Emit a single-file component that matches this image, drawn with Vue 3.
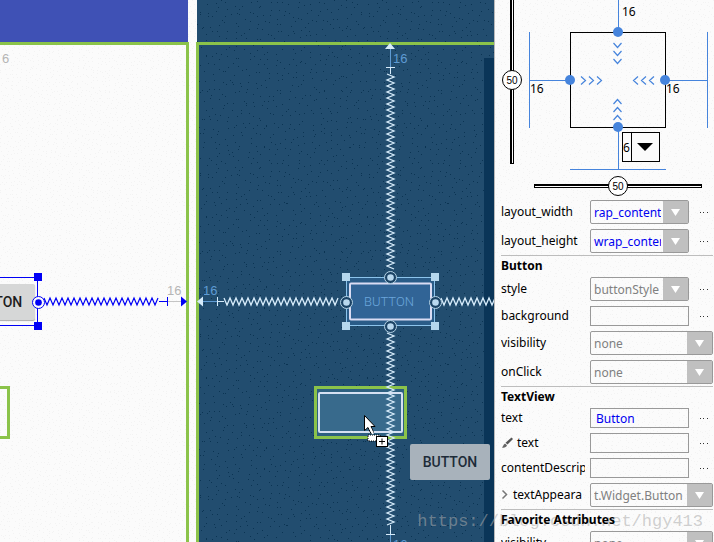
<script setup>
import { ref } from 'vue'

function speckles(size, cell, seed) {
  let s = seed
  const rnd = () => {
    s = (s * 16807) % 2147483647
    return s / 2147483647
  }
  let d = ''
  for (let y = 0; y < size; y += cell) {
    for (let x = 0; x < size; x += cell) {
      const px = x + Math.floor(rnd() * cell)
      const py = y + Math.floor(rnd() * cell)
      d += `M${px} ${py}h1v1h-1z`
    }
  }
  return d
}

// Spring between two anchors, drawn across (x) or down (y)
function spring(axis, from, to, centre) {
  const pts = []
  let side = -1
  for (let t = from; t <= to; t += 3) {
    const off = centre + side * 3.5
    pts.push(axis === 'x' ? `${t},${off}` : `${off},${t}`)
    side = -side
  }
  return pts.join(' ')
}

const darkDots = speckles(161, 7, 4711)
const lightDots = speckles(120, 4, 977)

const corners = [[346, 277], [435, 277], [346, 326], [435, 326]]
const anchors = [[390.5, 277.5], [390.5, 326.5], [346.5, 302.5], [435.5, 302.5]]

const vBias = ref(50)
const hBias = ref(50)

const sections = [
  {
    title: '',
    rows: [
      { id: 'lw', label: 'layout_width', kind: 'select', value: 'rap_content', blue: true, more: true },
      { id: 'lh', label: 'layout_height', kind: 'select', value: 'wrap_content', blue: true, more: true },
    ],
  },
  {
    title: 'Button',
    rows: [
      { id: 'style', label: 'style', kind: 'select', value: 'buttonStyle', more: true },
      { id: 'bg', label: 'background', kind: 'text', value: '', more: true },
      { id: 'vis', label: 'visibility', kind: 'select', value: 'none' },
      { id: 'click', label: 'onClick', kind: 'select', value: 'none' },
    ],
  },
  {
    title: 'TextView',
    rows: [
      { id: 'text', label: 'text', kind: 'text', value: 'Button', more: true },
      { id: 'ttext', label: 'text', kind: 'text', value: '', more: true, icon: 'brush' },
      { id: 'desc', label: 'contentDescrip', kind: 'text', value: '', more: true },
      { id: 'appear', label: 'textAppeara', kind: 'select', value: 't.Widget.Button', icon: 'expand' },
    ],
  },
  {
    title: 'Favorite Attributes',
    rows: [{ id: 'fvis', label: 'visibility', kind: 'select', value: 'none' }],
  },
]
</script>

<template>
  <main class="editor">
    <svg class="grain" aria-hidden="true">
      <defs>
        <pattern id="light" width="120" height="120" patternUnits="userSpaceOnUse">
          <path :d="lightDots" fill="#f3f3f3" shape-rendering="crispEdges" />
        </pattern>
      </defs>
      <rect width="100%" height="100%" fill="url(#light)" />
    </svg>

    <section class="pane design">
      <div class="appbar"></div>
      <div class="frame frame-right"></div>
      <div class="stage stage-right">
        <button class="widget widget-solid" type="button">BUTTON</button>
        <svg class="wires" width="189" height="542">
          <text x="2" y="63" class="dim grey">6</text>
          <g fill="none" stroke="#0000f5">
            <path d="M0 277.500H37.500V325.500H0" />
            <polyline :points="spring('x', 44, 159, 301.5)" stroke-width="1.200" />
            <path d="M159 301.500H167M167.500 297V306" />
          </g>
          <path d="M168 301.500H181" stroke="#c4c4c4" />
          <path d="M181 296.500L187 301.500L181 306.500z" fill="#0000f5" />
          <path d="M34 273h8v8h-8zM34 322h8v8h-8z" fill="#0000f5" />
          <circle cx="38.500" cy="302.500" r="6" fill="#fbfbfb" stroke="#0000f5" />
          <circle cx="38.500" cy="302.500" r="3.300" fill="#0000f5" />
          <text x="167" y="295" class="dim grey">16</text>
          <path d="M0 387.500H8.500V437.500H0" fill="none" stroke="#8bc34a" stroke-width="3" />
        </svg>
      </div>
    </section>

    <section class="pane blueprint">
      <svg class="grain" aria-hidden="true">
        <defs>
          <pattern id="dark" width="161" height="161" patternUnits="userSpaceOnUse">
            <path :d="darkDots" fill="#0b3453" shape-rendering="crispEdges" />
          </pattern>
        </defs>
        <rect width="100%" height="100%" fill="url(#dark)" />
      </svg>
      <div class="shadow"></div>
      <div class="appbar"></div>
      <div class="frame frame-left"></div>
      <div class="stage">
        <svg class="wires" width="298" height="542" viewBox="196 0 298 542">
          <g fill="none" stroke="#5f9bd3">
            <path d="M390.500 49V67M203 301.500H217M390.500 534V542" />
          </g>
          <rect x="346.500" y="277.500" width="88" height="48" fill="#2a5c88" stroke="#8cc4ec" />
          <rect x="350" y="283.500" width="81" height="36" rx="1" fill="#316496" stroke="#dadcf3" stroke-width="2" />
          <text x="389" y="306" text-anchor="middle" class="ghost">BUTTON</text>
          <rect x="315.500" y="387.500" width="90" height="50" fill="#2d6080" stroke="#8bc34a" stroke-width="3" />
          <rect x="319" y="393" width="83" height="39" rx="1" fill="#386a8c" stroke="#d5e0f2" stroke-width="2" />
          <g fill="none" stroke="#d6ebfa">
            <g stroke-width="1.300">
              <polyline :points="spring('y', 74, 271, 390.5)" />
              <polyline :points="spring('y', 333, 525, 390.5)" />
              <polyline :points="spring('x', 224, 340, 301.5)" />
              <polyline :points="spring('x', 441, 497, 301.5)" />
            </g>
            <path d="M386 67.500H395M390.500 67V74M390.500 525V534M386 534.500H395M217.500 297V306M217 301.500H224" />
          </g>
          <path d="M390 43L395 49H385zM197 301.500L203 296.500V306.500z" fill="#d6ebfa" />
          <rect v-for="(c, i) in corners" :key="i" :x="c[0] - 4" :y="c[1] - 4" width="8" height="8" fill="#b5d7ed" />
          <g v-for="(a, i) in anchors" :key="'a' + i">
            <circle :cx="a[0]" :cy="a[1]" r="6" fill="#1c4466" stroke="#b5d3e6" />
            <circle :cx="a[0]" :cy="a[1]" r="3.300" fill="#b9d8ee" />
          </g>
          <text x="393" y="63" class="dim sky">16</text>
          <text x="203" y="295" class="dim sky">16</text>
          <text x="393" y="549" class="dim sky">16</text>
          <g>
            <path d="M368 435h12v6h-12z" fill="#fff" stroke="#000" stroke-dasharray="1 1" />
            <path d="M364.500 415.500V430.500L368 427.500L371 433.500L373.500 432.500L371 426.500L375 426.500z" fill="#fff" stroke="#000" />
            <path d="M370 428L373 434" stroke="#fff" stroke-width="2" />
            <rect x="376.500" y="436.500" width="11" height="10" fill="#fff" stroke="#000" />
            <path d="M379 441.500H385M382 438.500V444.500" stroke="#000" />
          </g>
        </svg>
        <button class="widget widget-drag" type="button">BUTTON</button>
      </div>
    </section>

    <div class="watermark">https://blog.csdn.net/hgy413</div>

    <aside class="panel">
      <div class="inspector">
        <svg width="219" height="200" viewBox="1 0 219 200">
          <g fill="none" stroke="#4684dc">
            <path d="M124.500 0V32M124.500 127V169M76 169.500H172M35.500 32V128M36 80.500H76M172 80.500H213M213.500 32V128" />
          </g>
          <rect x="76.500" y="32.500" width="95" height="95" fill="none" stroke="#000" />
          <g fill="#4684dc">
            <circle cx="124" cy="32" r="5" />
            <circle cx="124" cy="127" r="5" />
            <circle cx="76" cy="80" r="5" />
            <circle cx="171" cy="80" r="5" />
          </g>
          <g fill="none" stroke="#4684dc" stroke-width="1.200">
            <path d="M119.500 43l4 4.500l4-4.500M119.500 51l4 4.500l4-4.500M119.500 59l4 4.500l4-4.500" />
            <path d="M119.500 104l4-4.500l4 4.500M119.500 112l4-4.500l4 4.500M119.500 120l4-4.500l4 4.500" />
            <path d="M87 76.500l4.500 4l-4.500 4M95 76.500l4.500 4l-4.500 4M103 76.500l4.500 4l-4.500 4" />
            <path d="M144 76.500l-4.500 4l4.500 4M152 76.500l-4.500 4l4.500 4M160 76.500l-4.500 4l4.500 4" />
          </g>
          <text x="128" y="16">16</text>
          <text x="36" y="93">16</text>
          <text x="172" y="93">16</text>
        </svg>
        <label class="bias bias-v">
          <input v-model="vBias" type="range" min="0" max="100" aria-label="Vertical bias" />
          <span>{{ vBias }}</span>
        </label>
        <label class="bias bias-h">
          <input v-model="hBias" type="range" min="0" max="100" aria-label="Horizontal bias" />
          <span>{{ hBias }}</span>
        </label>
        <div class="margin">
          <select aria-label="Bottom margin"><option>6</option></select>
          <svg width="28" height="28"><path d="M5 10h16l-8 8z" /></svg>
        </div>
      </div>

      <section v-for="(s, i) in sections" :key="i" class="group">
        <h2 v-if="s.title">{{ s.title }}</h2>
        <div v-for="r in s.rows" :key="r.id" class="row" :class="{ wide: !r.more }">
          <label :for="r.id">
            <svg v-if="r.icon === 'brush'" width="16" height="12" viewBox="0 0 16 12">
              <path d="M10.500 0.500L12 2L6.500 7.500L4.500 5.800z" fill="#555" />
              <path d="M4 6.500L6 8.300C5.500 10.500 3 11 1 10.500C2.500 9.500 2 7.500 4 6.500z" fill="#666" />
            </svg>
            <svg v-if="r.icon === 'expand'" width="12" height="12" viewBox="0 0 12 12">
              <path d="M1.500 1.500L5.500 5.500L1.500 9.500" fill="none" stroke="#777" stroke-width="1.500" />
            </svg>
            <span>{{ r.label }}</span>
          </label>
          <div v-if="r.kind === 'select'" class="combo" :class="{ blue: r.blue }">
            <select :id="r.id"><option>{{ r.value }}</option></select>
            <svg width="25" height="22"><path d="M8 8h9l-4.500 7z" fill="#fff" /></svg>
          </div>
          <input v-else :id="r.id" class="field" type="text" :value="r.value" />
          <button v-if="r.more" class="more" type="button" :aria-label="'More for ' + r.label">
            <svg width="8" height="1" shape-rendering="crispEdges"><path d="M0 0h1v1h-1zM3 0h1v1h-1zM7 0h1v1h-1z" fill="#333" /></svg>
          </button>
        </div>
      </section>
    </aside>
  </main>
</template>

<style>
body {
  overflow: hidden;
  background: #fbfbfb;
}
</style>

<style scoped>
.editor {
  position: relative;
  display: flex;
  height: 100vh;
  overflow: hidden;
  font-family: "Noto Sans", "Open Sans", sans-serif;
  font-size: 12px;
  color: #000;
}
.grain {
  position: absolute;
  inset: 0;
  width: 100%;
  height: 100%;
}
.pane {
  position: relative;
  display: flex;
  flex-direction: column;
  overflow: hidden;
}
.design {
  flex: 189 1 0;
  margin-right: 7px;
}
.blueprint {
  flex: 298 1 0;
  background: #224d6f;
}
.appbar {
  position: relative;
  flex: none;
  height: 42px;
}
.design .appbar {
  margin-right: 1px;
  background: #3f51b5;
}
.blueprint .appbar {
  border-left: 1px solid #fbfbfb;
}
.frame {
  position: relative;
  flex: 1;
  border-top: 3px solid #8bc34a;
}
.frame-right {
  border-right: 3px solid #8bc34a;
}
.frame-left {
  border-left: 3px solid #8bc34a;
}
.shadow {
  position: absolute;
  top: 58px;
  right: 0;
  bottom: 0;
  width: 10px;
  background: #0a3558;
}
.stage {
  position: absolute;
  top: 0;
  left: 0;
  width: 298px;
  height: 542px;
}
.stage-right {
  left: auto;
  right: 0;
  width: 189px;
}
.wires {
  position: absolute;
  inset: 0;
  overflow: visible;
}
.dim {
  font-family: "Liberation Sans", sans-serif;
  font-size: 13px;
}
.grey {
  fill: #b5b5b5;
}
.sky {
  fill: #5f9bd3;
}
.ghost {
  font-family: Roboto, sans-serif;
  font-size: 13px;
  font-weight: 300;
  fill: #6ba6dc;
}
.widget {
  position: absolute;
  width: 80px;
  height: 36px;
  padding: 0;
  border: 0;
  border-radius: 2px;
  font: 500 14px Roboto, sans-serif;
}
.widget-solid {
  left: -45px;
  top: 284px;
  background: #d6d7d7;
  box-shadow: 0 1px 1px #aaa;
  color: #1e1e1e;
}
.widget-drag {
  left: 214px;
  top: 444px;
  background: #a8b2bb;
  color: #1d2b38;
}
.panel {
  position: relative;
  flex: none;
  box-sizing: border-box;
  width: 220px;
  border-left: 1px solid #b9b9b9;
}
.inspector {
  position: relative;
  height: 200px;
}
.inspector > svg {
  display: block;
}
.bias {
  position: absolute;
  display: grid;
  place-items: center;
}
.bias > * {
  grid-area: 1 / 1;
}
.bias span {
  z-index: 1;
  font: 10px "Liberation Sans", sans-serif;
  pointer-events: none;
}
.bias-v {
  left: 7px;
  top: -4px;
  width: 20px;
  height: 168px;
}
.bias-h {
  left: 39px;
  top: 176px;
  width: 168px;
  height: 20px;
}
.bias input {
  appearance: none;
  margin: 0;
  width: 100%;
  height: 100%;
  background: transparent;
}
.bias-v input {
  writing-mode: vertical-lr;
}
.bias input::-webkit-slider-runnable-track {
  box-sizing: border-box;
  border: 1px solid #000;
  background: #fff;
}
.bias-h input::-webkit-slider-runnable-track {
  height: 4px;
  border-top-width: 2px;
}
.bias-v input::-webkit-slider-runnable-track {
  width: 4px;
  border-left-width: 2px;
}
.bias input::-webkit-slider-thumb {
  appearance: none;
  box-sizing: border-box;
  width: 20px;
  height: 20px;
  border: 1px solid #000;
  border-radius: 50%;
  background: #fff;
}
.bias-h input::-webkit-slider-thumb {
  margin-top: -10px;
}
.bias-v input::-webkit-slider-thumb {
  margin-left: -10px;
}
.margin {
  position: absolute;
  left: 127px;
  top: 132px;
  box-sizing: border-box;
  display: flex;
  width: 38px;
  height: 30px;
  border: 1px solid #000;
  background: #fbfbfb;
}
.margin select {
  flex: 1;
  min-width: 0;
  padding: 0;
  border: 0;
  background: none;
  font: inherit;
  color: #000;
  appearance: none;
}
.margin svg {
  flex: none;
  box-sizing: border-box;
  border-left: 1px solid #000;
  pointer-events: none;
}
.group {
  display: grid;
  gap: 5px;
  padding: 0 0 2px;
}
.group + .group {
  margin: 0 1px 0 6px;
  border-top: 1px solid #bdbdbd;
}
.group:not(:has(h2)) {
  margin: 0 1px 0 6px;
}
h2 {
  margin: 0 0 -3px;
  font-size: 12px;
  font-weight: 700;
  line-height: 19px;
}
.row {
  display: grid;
  grid-template-columns: 84px minmax(0, 1fr) 19px;
  column-gap: 5px;
  align-items: center;
}
.row.wide {
  grid-template-columns: 84px minmax(0, 1fr);
}
.row label {
  display: flex;
  align-items: center;
  overflow: hidden;
  line-height: 20px;
  white-space: nowrap;
}
.row label svg {
  flex: none;
}
.combo {
  display: flex;
  box-sizing: border-box;
  height: 24px;
  border: 1px solid #999;
  border-radius: 2px;
  color: #808080;
}
.blue {
  color: #0000f0;
}
.combo select {
  flex: 1;
  min-width: 0;
  padding: 0 2px 0 3px;
  border: 0;
  background: none;
  font: inherit;
  color: inherit;
  appearance: none;
}
.combo svg {
  flex: none;
  background: #c0c0c0;
}
.field {
  box-sizing: border-box;
  width: 100%;
  height: 20px;
  padding: 0 5px;
  border: 1px solid #999;
  background: none;
  font: inherit;
  color: #0000f0;
}
.more {
  display: grid;
  place-items: center;
  height: 20px;
  padding: 0;
  border: 0;
  background: none;
}
.watermark {
  position: absolute;
  right: 11px;
  bottom: 9px;
  font: 17px/22px "Liberation Mono", monospace;
  color: rgba(170, 170, 170, 0.55);
  pointer-events: none;
}
</style>
